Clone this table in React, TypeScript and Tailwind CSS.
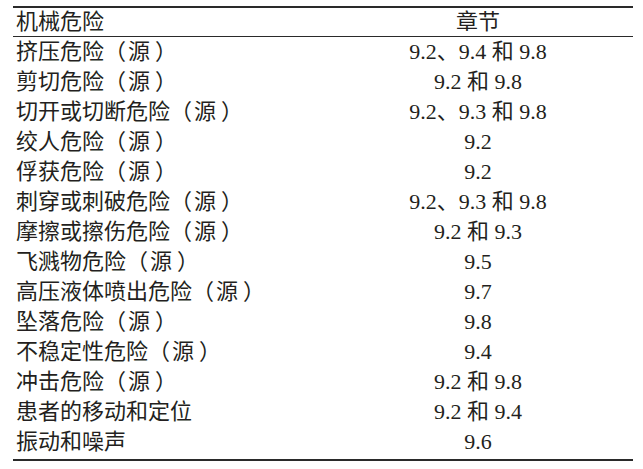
const rows: [string, string][] = [
  ['挤压危险（源）', '9.2、9.4 和 9.8'],
  ['剪切危险（源）', '9.2 和 9.8'],
  ['切开或切断危险（源）', '9.2、9.3 和 9.8'],
  ['绞人危险（源）', '9.2'],
  ['俘获危险（源）', '9.2'],
  ['刺穿或刺破危险（源）', '9.2、9.3 和 9.8'],
  ['摩擦或擦伤危险（源）', '9.2 和 9.3'],
  ['飞溅物危险（源）', '9.5'],
  ['高压液体喷出危险（源）', '9.7'],
  ['坠落危险（源）', '9.8'],
  ['不稳定性危险（源）', '9.4'],
  ['冲击危险（源）', '9.2 和 9.8'],
  ['患者的移动和定位', '9.2 和 9.4'],
  ['振动和噪声', '9.6'],
];

// the print sets the parens of "（源）" a bit looser
function Hazard({ text }: { text: string }) {
  const m = text.match(/^(.*)（源）$/);
  if (!m) return <>{text}</>;
  return (
    <>
      {m[1]}（<span className="ml-[2px]">源</span>
      <span className="ml-[5px]">）</span>
    </>
  );
}

export default function App() {
  return (
    <div className="w-[643px] h-[469px] bg-white pt-[6px] text-[#231f20] font-['Liberation_Serif','Noto_Sans_CJK_SC',serif] [text-spacing-trim:space-all]">
      <div className="mx-[13px] w-[620px] border-t-2 border-b-2 border-[#2a2a2a] pb-[2px]">
        <div className="grid grid-cols-2 h-[29px] items-center border-b border-[#2a2a2a] text-[22px] leading-none">
          <div className="pl-[3px]">机械危险</div>
          <div className="text-center">章节</div>
        </div>
        {rows.map(([a, b]) => (
          <div key={a} className="grid grid-cols-2 h-[30px] items-center text-[22px] leading-none">
            <div className="pl-[3px] whitespace-nowrap">
              <Hazard text={a} />
            </div>
            <div className="text-center whitespace-nowrap">{b}</div>
          </div>
        ))}
      </div>
    </div>
  );
}
